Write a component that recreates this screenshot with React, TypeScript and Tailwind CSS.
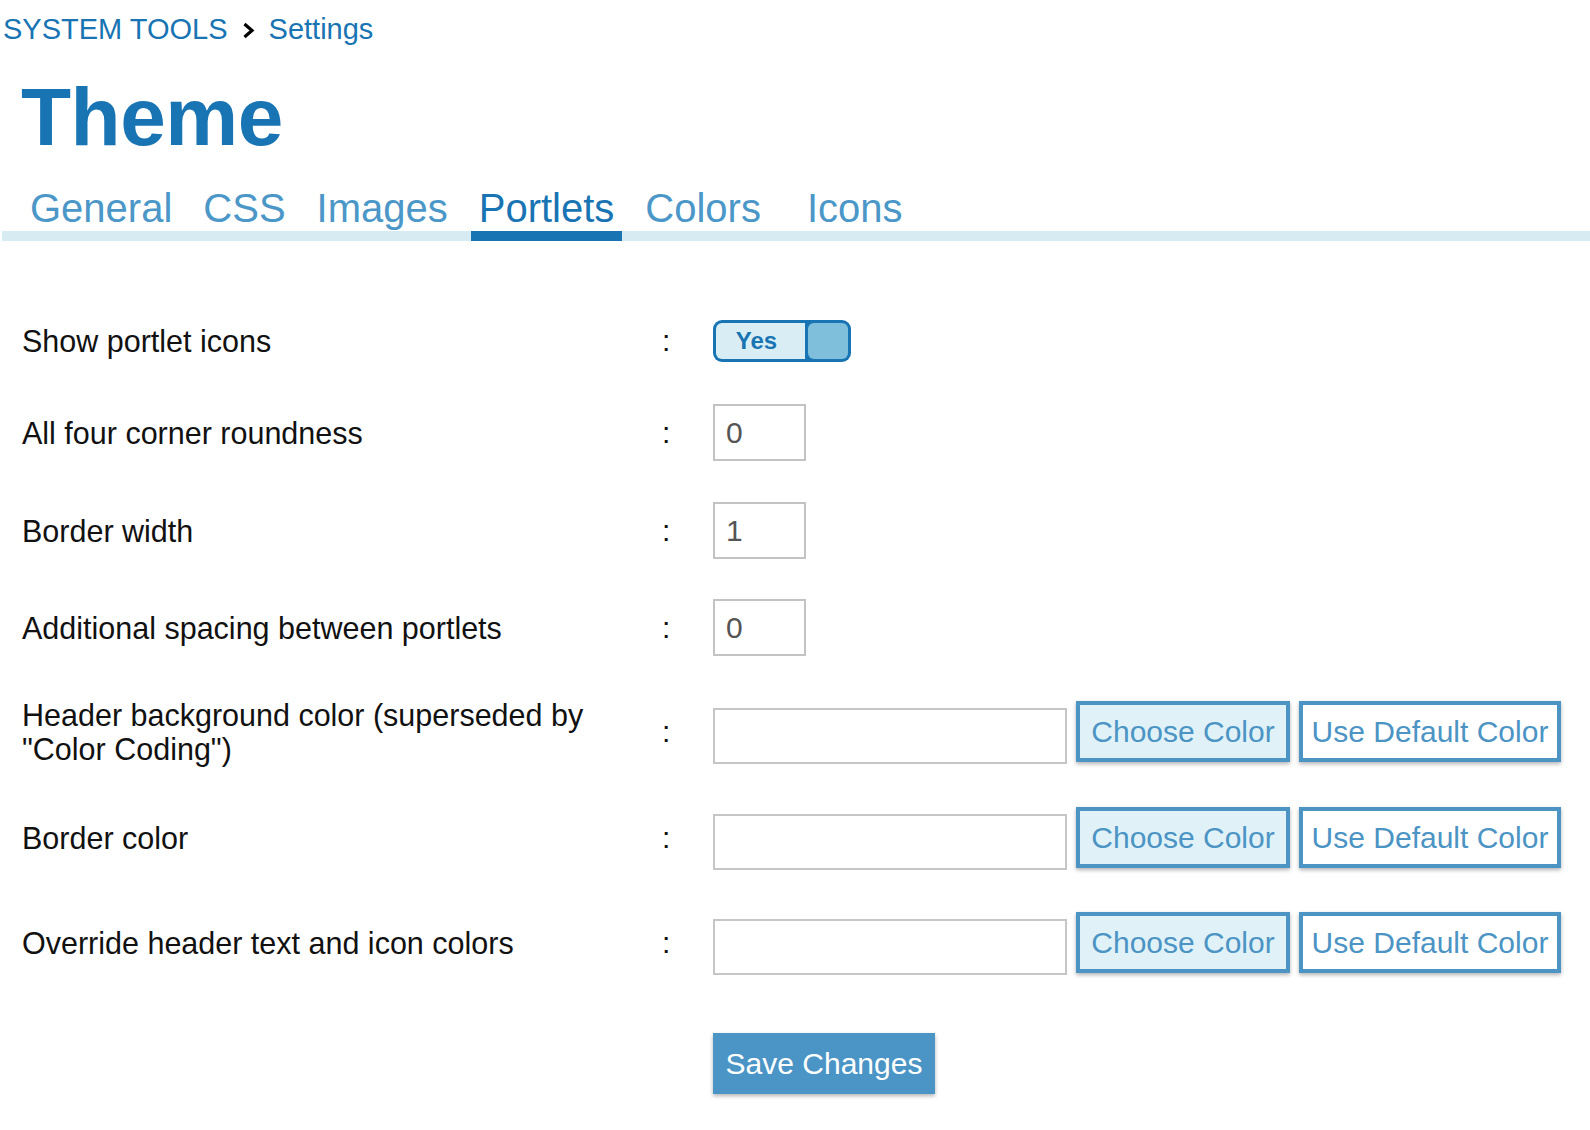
import { useState } from 'react';

type Tab = 'general' | 'css' | 'images' | 'portlets' | 'colors' | 'icons';

const TABS: { id: Tab; label: string; extra?: string }[] = [
  { id: 'general', label: 'General' },
  { id: 'css', label: 'CSS' },
  { id: 'images', label: 'Images' },
  { id: 'portlets', label: 'Portlets' },
  { id: 'colors', label: 'Colors' },
  { id: 'icons', label: 'Icons', extra: 'ml-[15px]' },
];

const COLOR_ROWS = [
  { label: 'Header background color (superseded by "Color Coding")', mt: 'mt-[45px]' },
  { label: 'Border color', mt: 'mt-[45px]' },
  { label: 'Override header text and icon colors', mt: 'mt-[44px]' },
];

const NUMBER_ROWS = [
  { label: 'All four corner roundness', value: '0', mt: 'mt-[42px]' },
  { label: 'Border width', value: '1', mt: 'mt-[41px]' },
  { label: 'Additional spacing between portlets', value: '0', mt: 'mt-[40px]' },
];

function Label({ children }: { children: React.ReactNode }) {
  return <div className="w-[640px] pr-[62px] text-[30.5px] leading-[34px] text-[#111]">{children}</div>;
}

function Colon() {
  return <div className="w-[51px] text-[30px] leading-[34px] text-[#111]">:</div>;
}

export default function App() {
  const [tab, setTab] = useState<Tab>('portlets');
  const [showIcons, setShowIcons] = useState(true);

  return (
    <div className="min-h-screen bg-white font-['Liberation_Sans',Arial,Helvetica,sans-serif]">
      {/* breadcrumb */}
      <div className="flex items-center pl-[3px] pt-[13px] text-[29px] leading-[32px] text-[#1874b3]">
        <span>SYSTEM TOOLS</span>
        <svg width="13" height="17" viewBox="0 0 13 17" className="mx-[14px] mt-[2px]">
          <path d="M2.5 2 L10 8.5 L2.5 15" fill="none" stroke="#000" strokeWidth="3.2" strokeLinejoin="miter" />
        </svg>
        <span>Settings</span>
      </div>

      <h1 className="mt-[26px] pl-[21px] text-[82px] font-bold leading-[92px] tracking-[-0.5px] text-[#1874b3]">
        Theme
      </h1>

      {/* tabs */}
      <div className="ml-[2px] mt-[22px] flex gap-[15px] border-b-[10px] border-[#d7ecf2] pl-[20px]">
        {TABS.map((t) => (
          <button
            key={t.id}
            onClick={() => setTab(t.id)}
            className={`-mb-[10px] border-b-[10px] px-[8px] text-[40px] leading-[46px] ${t.extra ?? ''} ${
              tab === t.id ? 'border-[#1874b3] text-[#1874b3]' : 'border-transparent text-[#4b97c8]'
            }`}
          >
            {t.label}
          </button>
        ))}
      </div>

      <div className="flex flex-col pl-[22px] pt-[79px]">
        <div className="flex items-center">
          <Label>Show portlet icons</Label>
          <Colon />
          <button
            onClick={() => setShowIcons((v) => !v)}
            className="flex h-[42px] w-[138px] gap-[3px] rounded-[9px] bg-[#1874b3] p-[3px]"
          >
            <span className="flex flex-1 items-center justify-center rounded-l-[6px] bg-[#d9eef4] pr-[8px] text-[24px] font-bold text-[#1874b3]">
              {showIcons ? 'Yes' : 'No'}
            </span>
            <span className="w-[40px] rounded-[6px] bg-[#7fbfdc]" />
          </button>
        </div>

        {NUMBER_ROWS.map((r) => (
          <div key={r.label} className={`flex items-center ${r.mt}`}>
            <Label>{r.label}</Label>
            <Colon />
            <input
              defaultValue={r.value}
              className="h-[57px] w-[93px] border-2 border-[#c3c3c3] pl-[11px] font-['Liberation_Sans',Arial,sans-serif] text-[30px] text-[#555] outline-none"
            />
          </div>
        ))}

        {COLOR_ROWS.map((r) => (
          <div key={r.label} className={`flex h-[61px] items-center ${r.mt}`}>
            <Label>{r.label}</Label>
            <Colon />
            <div className="flex h-[61px] items-start">
              <input className="mt-[7px] h-[56px] w-[354px] border-2 border-[#c6c6c6] outline-none" />
              <button className="ml-[9px] h-[61px] w-[214px] border-[4px] border-[#4b94c4] bg-[#e0f2f7] text-[30px] text-[#4b94c4] shadow-[0_2px_4px_rgba(0,0,0,0.3)]">
                Choose Color
              </button>
              <button className="ml-[9px] h-[61px] w-[262px] border-[4px] border-[#4b94c4] bg-white text-[30px] text-[#4b94c4] shadow-[0_2px_4px_rgba(0,0,0,0.3)]">
                Use Default Color
              </button>
            </div>
          </div>
        ))}

        <div className="mt-[60px] pl-[691px]">
          <button className="h-[61px] w-[222px] bg-[#4a95c5] text-[30px] text-white shadow-[0_2px_4px_rgba(0,0,0,0.3)]">
            Save Changes
          </button>
        </div>
      </div>
    </div>
  );
}
